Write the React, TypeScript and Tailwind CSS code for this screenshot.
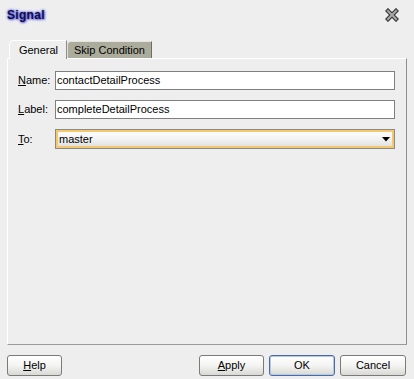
const Mn = ({ k, rest }: { k: string; rest: string }) => (
  <span>
    <span className="underline underline-offset-1">{k}</span>
    {rest}
  </span>
);

const CloseIcon = () => (
  <svg width="14" height="14" viewBox="0 0 14 14">
    <path d="M3 3 L11 11 M11 3 L3 11" stroke="#3a3a3a" strokeWidth="4.4" strokeLinecap="square" />
    <path d="M3 3 L11 11 M11 3 L3 11" stroke="#a8a8a8" strokeWidth="2" strokeLinecap="square" />
  </svg>
);

const Btn = ({ children, w, def }: { children: React.ReactNode; w: string; def?: boolean }) => (
  <button
    type="button"
    className={`${w} h-[21px] rounded-[3px] border bg-gradient-to-b from-white via-[#f4f4f2] to-[#d8d8d4] text-[11px] text-black ${
      def ? 'border-[#4a6aa0] shadow-[inset_0_0_0_1px_#b4c8ea]' : 'border-[#7a7a7a]'
    }`}
  >
    {children}
  </button>
);

export default function App() {
  return (
    <div className="flex h-[379px] w-[414px] flex-col bg-[#eeeeee] font-['Liberation_Sans',Arial,sans-serif] text-[11px] text-black">
      {/* title */}
      <div className="flex h-[40px] items-start justify-between pl-[7px] pr-[15px] pt-[6px]">
        <span className="text-[12px] font-bold tracking-[0.3px] text-[#101040] [text-shadow:0_0_3px_#5a5ae8,0_0_2px_#7070f0,1px_1px_2px_#8080e0]">
          Signal
        </span>
        <span className="mt-[2px]">
          <CloseIcon />
        </span>
      </div>

      {/* tabs */}
      <div className="flex h-[18px] items-end pl-[9px]">
        <div className="relative z-10 -mb-[1px] flex h-[19px] w-[58px] items-center justify-center rounded-tl-[5px] border-l border-t border-r border-l-white border-t-white border-r-[#8c8c8c] bg-[#eeeeee] pl-[1px]">
          General
        </div>
        <div className="flex h-[17px] w-[85px] items-center justify-center rounded-tl-[4px] border-l border-t border-r border-l-[#e0e0d8] border-t-[#e6e6de] border-r-[#6e6e66] bg-[#acac9c]">
          Skip Condition
        </div>
      </div>

      {/* panel */}
      <div className="mx-[7px] flex h-[287px] flex-col gap-[10px] border border-l-white border-t-white border-r-[#8e8e8e] border-b-[#9a9a9a] pl-[10px] pr-[11px] pt-[12px]">
        <div className="flex h-[19px] items-center">
          <span className="w-[37px]">
            <Mn k="N" rest="ame:" />
          </span>
          <div className="flex h-[19px] flex-1 items-center border border-[#7f7f7f] bg-white pl-[1px]">
            contactDetailProcess
          </div>
        </div>
        <div className="flex h-[19px] items-center">
          <span className="w-[37px]">
            <Mn k="L" rest="abel:" />
          </span>
          <div className="flex h-[19px] flex-1 items-center border border-[#7f7f7f] bg-white pl-[1px]">
            completeDetailProcess
          </div>
        </div>
        <div className="flex h-[20px] items-center">
          <span className="w-[37px]">
            <Mn k="T" rest="o:" />
          </span>
          <div className="flex h-[20px] flex-1 items-center justify-between border border-[#8a8a8a] bg-gradient-to-b from-white via-[#f2f2f2] to-[#dedede] pl-[3px] pr-[4px] shadow-[inset_0_0_0_2px_#f6c86c]">
            <span>master</span>
            <svg width="8" height="5" viewBox="0 0 8 5">
              <path d="M0 0 H8 L4 4.5 Z" fill="#000" />
            </svg>
          </div>
        </div>
      </div>

      {/* buttons */}
      <div className="flex items-center pl-[7px] pr-[8px] pt-[10px]">
        <Btn w="w-[55px]">
          <Mn k="H" rest="elp" />
        </Btn>
        <div className="flex-1" />
        <div className="flex gap-[5px]">
          <Btn w="w-[65px]">
            <Mn k="A" rest="pply" />
          </Btn>
          <Btn w="w-[66px]" def>
            OK
          </Btn>
          <Btn w="w-[66px]">Cancel</Btn>
        </div>
      </div>
    </div>
  );
}
